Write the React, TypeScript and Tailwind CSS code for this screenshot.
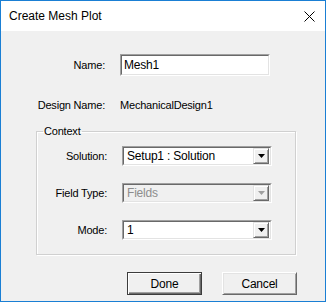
import type { ReactNode } from 'react';

const font = { fontFamily: '"Liberation Sans", Arial, sans-serif' };

function Label({ children }: { children: ReactNode }) {
  return <div className="w-[70px] text-right text-[11px] tracking-[-0.2px]">{children}</div>;
}

function Combo({ value, disabled }: { value: string; disabled?: boolean }) {
  return (
    <div className="w-[150px] h-[20px] border border-t-[#a0a0a0] border-l-[#a0a0a0] border-b-white border-r-white">
      <div
        className={`h-full flex items-center border border-t-[#696969] border-l-[#696969] border-b-[#e3e3e3] border-r-[#e3e3e3] ${
          disabled ? 'bg-[#f0f0f0]' : 'bg-white'
        }`}
      >
        <span className={`flex-1 pl-[3px] text-[12px] tracking-[-0.2px] ${disabled ? 'text-[#8d8d8d]' : 'text-black'}`}>
          {value}
        </span>
        <div className="w-[16px] h-[16px] mr-[1px] bg-[#f0f0f0] border border-t-[#e3e3e3] border-l-[#e3e3e3] border-b-[#696969] border-r-[#696969] flex items-center justify-center shadow-[inset_1px_1px_0_#fff,inset_-1px_-1px_0_#a0a0a0]">
          <svg width="7" height="4" viewBox="0 0 7 4">
            <polygon points="0,0 7,0 3.5,4" fill={disabled ? '#a0a0a0' : '#000'} />
          </svg>
        </div>
      </div>
    </div>
  );
}

function Button({ children, primary }: { children: ReactNode; primary?: boolean }) {
  return (
    <button
      className={`w-[75px] h-[23px] bg-[#f0f0f0] text-[12px] tracking-[-0.2px] text-black flex items-center justify-center ${
        primary
          ? 'border border-[#3c3c3c] shadow-[inset_1px_1px_0_#fff,inset_-1px_-1px_0_#696969,inset_-2px_-2px_0_#a0a0a0]'
          : 'border border-t-white border-l-white border-b-[#696969] border-r-[#696969] shadow-[inset_1px_1px_0_#e3e3e3,inset_-1px_-1px_0_#a0a0a0]'
      }`}
    >
      {children}
    </button>
  );
}

export default function App() {
  return (
    <div style={font} className="w-[326px] h-[302px] border border-[#1a7fd4] flex flex-col bg-[#f0f0f0]">
      <div className="h-[30px] bg-white flex items-center justify-between pl-[8px] pr-[10px]">
        <span className="text-[12px] text-black">Create Mesh Plot</span>
        <svg width="11" height="11" viewBox="0 0 11 11">
          <path d="M0.5 0.5 L10.5 10.5 M10.5 0.5 L0.5 10.5" stroke="#000" strokeWidth="1" />
        </svg>
      </div>

      <div className="flex-1 flex flex-col">
        <div className="flex items-center mt-[23px]">
          <div className="w-[104px] text-right text-[11px] tracking-[-0.2px]">Name:</div>
          <div className="ml-[15px] w-[150px] h-[22px] border border-t-[#a0a0a0] border-l-[#a0a0a0] border-b-white border-r-white">
            <div className="h-full bg-white flex items-center pl-[2px] text-[12px] tracking-[-0.2px] border border-t-[#696969] border-l-[#696969] border-b-[#e3e3e3] border-r-[#e3e3e3]">
              Mesh1
            </div>
          </div>
        </div>

        <div className="flex items-center mt-[21px] h-[16px]">
          <div className="w-[104px] text-right text-[11px] tracking-[-0.2px]">Design Name:</div>
          <div className="ml-[15px] text-[11px] tracking-[-0.2px]">MechanicalDesign1</div>
        </div>

        <fieldset className="ml-[35px] w-[260px] h-[131px] mt-[11px] border border-[#d0d0d0] shadow-[inset_1px_1px_0_#fff,1px_1px_0_#fff] px-0">
          <legend className="ml-[6px] px-[1px] text-[11px] leading-[14px] tracking-[-0.2px]">Context</legend>
          <div className="flex flex-col gap-[17px] mt-[8px]">
            <div className="flex items-center">
              <Label>Solution:</Label>
              <div className="ml-[15px]">
                <Combo value="Setup1 : Solution" />
              </div>
            </div>
            <div className="flex items-center">
              <Label>Field Type:</Label>
              <div className="ml-[15px]">
                <Combo value="Fields" disabled />
              </div>
            </div>
            <div className="flex items-center">
              <Label>Mode:</Label>
              <div className="ml-[15px]">
                <Combo value="1" />
              </div>
            </div>
          </div>
        </fieldset>

        <div className="flex mt-[17px] ml-[126px] gap-[20px]">
          <Button primary>Done</Button>
          <Button>Cancel</Button>
        </div>
      </div>
    </div>
  );
}
